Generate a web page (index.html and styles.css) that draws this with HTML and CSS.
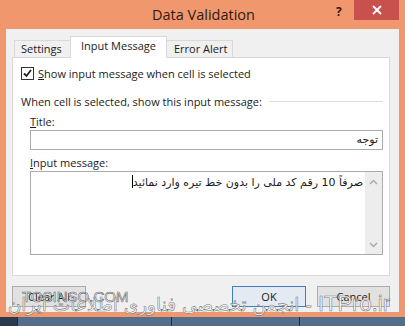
FILE: index.html
```html
<!DOCTYPE html>
<html>
<head>
<meta charset="utf-8">
<link rel="stylesheet" href="styles.css">
</head>
<body>
<div class="window">
  <div class="titlebar">
    <span class="title">Data Validation</span>
    <span class="help">?</span>
    <span class="close"><svg width="10" height="10" viewBox="0 0 10 10"><path d="M1 1L9 9M9 1L1 9" stroke="#fff" stroke-width="1.8"/></svg></span>
  </div>
  <div class="client">
    <div class="tabs">
      <div class="tab">Settings</div>
      <div class="tab active">Input Message</div>
      <div class="tab">Error Alert</div>
    </div>
    <div class="panel">
      <div class="check">
        <span class="box"><svg width="11" height="11" viewBox="0 0 11 11"><path d="M2 5.5L4.5 8L9 2" fill="none" stroke="#222" stroke-width="1.8"/></svg></span>
        <span><u>S</u>how input message when cell is selected</span>
      </div>
      <div class="group"><span>When cell is selected, show this input message:</span><span class="line"></span></div>
      <div class="lbl"><u>T</u>itle:</div>
      <div class="input" dir="rtl">توجه</div>
      <div class="lbl"><u>I</u>nput message:</div>
      <div class="textarea">
        <div class="text" dir="rtl">صرفاً 10 رقم کد ملی را بدون خط تیره وارد نمائید<span class="caret"></span></div>
        <div class="scroll">
          <svg width="9" height="6" viewBox="0 0 9 6"><path d="M1 5L4.5 1.5L8 5" fill="none" stroke="#a6a6a6" stroke-width="1.3"/></svg>
          <svg width="9" height="6" viewBox="0 0 9 6"><path d="M1 1L4.5 4.5L8 1" fill="none" stroke="#a6a6a6" stroke-width="1.3"/></svg>
        </div>
      </div>
    </div>
    <div class="buttons">
      <div class="btn">Clear All</div>
      <div class="spacer"></div>
      <div class="btn ok">OK</div>
      <div class="btn">Cancel</div>
    </div>
  </div>
  <div class="taskbar"><span class="seg s1"></span><span class="seg s2"></span><span class="seg s3"></span><span class="seg s4"></span></div>
  <div class="watermark" dir="rtl"><span class="wm-en">ITPro.ir</span> - انجمن تخصصی فناوری اطلاعات ایران</div>
  <div class="watermark2">TOSINSO.COM</div>
</div>
</body>
</html>
```
FILE: styles.css
```css
* { box-sizing: border-box; }
html, body { margin: 0; padding: 0; }
body {
  width: 405px;
  height: 326px;
  overflow: hidden;
  background: #f0976d;
  font-family: "Open Sans", "DejaVu Sans", sans-serif;
  font-size: 11px;
  color: #1b1b1b;
}
.window {
  position: relative;
  width: 405px;
  height: 326px;
  display: flex;
  flex-direction: column;
}
.titlebar {
  height: 29px;
  display: flex;
  align-items: flex-start;
  justify-content: center;
  position: relative;
}
.title {
  font-size: 14.5px;
  color: #2e1b12;
  line-height: 29px;
  margin-left: 2px;
}
.help {
  position: absolute;
  left: 336px;
  top: 3px;
  font-weight: bold;
  font-size: 12px;
  color: #2e1b12;
}
.close {
  position: absolute;
  left: 354px;
  top: 0;
  width: 45px;
  height: 20px;
  background: #c8514e;
  display: flex;
  align-items: center;
  justify-content: center;
}
.client {
  margin: 0 6px 0 6px;
  height: 283px;
  background: #f0f0f0;
  padding: 7px 9px 0 6px;
  display: flex;
  flex-direction: column;
}
.tabs {
  display: flex;
  align-items: flex-end;
  height: 22px;
  padding-left: 2px;
  position: relative;
  z-index: 2;
}
.tab {
  height: 17px;
  border: 1px solid #d9d9d9;
  border-bottom: none;
  background: #f0f0f0;
  line-height: 15px;
  padding: 0 6px;
  margin-bottom: 1px;
  white-space: nowrap;
}
.tab:first-child { width: 57px; }
.tab:nth-child(3) { width: 66px; border-left: none; padding: 0 0 0 7px; }
.tab.active {
  width: 97px;
  height: 22px;
  background: #fff;
  margin: 0 0 0 -1px;
  padding-left: 10px;
  line-height: 17px;
  border-right: 1px solid #d9d9d9;
}
.panel {
  height: 219px;
  margin-top: -1px;
  background: #fff;
  border: 1px solid #d9d9d9;
  padding: 9px 6px 0 8px;
  display: flex;
  flex-direction: column;
}
.check {
  display: flex;
  align-items: center;
  height: 13px;
  gap: 4px;
}
.box {
  width: 13px;
  height: 13px;
  border: 1px solid #333;
  display: flex;
  align-items: center;
  justify-content: center;
  background: #fff;
}
.group {
  display: flex;
  align-items: center;
  margin-top: 14px;
  height: 15px;
  gap: 7px;
}
.line {
  flex: 1;
  height: 1px;
  background: #dcdcdc;
}
.lbl {
  margin-left: 9px;
  height: 15px;
  line-height: 15px;
  margin-top: 5px;
}
.input {
  margin: 1px 0 0 9px;
  height: 20px;
  border: 1px solid #ababab;
  line-height: 18px;
  padding: 0 4px;
  font-family: "DejaVu Sans", sans-serif;
  font-size: 11px;
}
.textarea {
  margin: 1px 0 0 9px;
  height: 84px;
  border: 1px solid #ababab;
  display: flex;
}
.text {
  flex: 1;
  padding: 3px 2px 0 0;
  font-family: "DejaVu Sans", sans-serif;
  font-size: 11px;
  line-height: 15px;
}
.caret {
  display: inline-block;
  width: 1px;
  height: 13px;
  background: #000;
  vertical-align: -2px;
}
.scroll {
  width: 17px;
  background: #ededed;
  display: flex;
  flex-direction: column;
  align-items: center;
  justify-content: space-between;
  padding: 7px 0 6px;
}
.buttons {
  display: flex;
  margin-top: 10px;
  gap: 11px;
}
.spacer { flex: 1; }
.btn {
  width: 74px;
  height: 21px;
  border: 1px solid #adadad;
  background: #e1e1e1;
  text-align: center;
  line-height: 19px;
}
.btn + .btn { width: 73px; }
.btn.ok {
  border-color: #3c80c0;
  background: #e3eaf1;
}
.taskbar {
  margin-top: 5px;
  height: 9px;
  background: #536d8d;
  display: flex;
}
.seg { height: 9px; border-right: 1px solid #1d2c3d; }
.s1 { width: 18px; background: #2a3a4e; }
.s2 { width: 154px; }
.s3 { width: 128px; }
.s4 { flex: 1; border-right: none; }
.watermark {
  position: absolute;
  right: 15px;
  top: 292px;
  font-family: "DejaVu Sans", sans-serif;
  font-size: 18.5px;
  line-height: 24px;
  white-space: nowrap;
  color: rgba(255,255,255,0.88);
  -webkit-text-stroke: 0.6px rgba(80,80,80,0.75);
  z-index: 5;
}
.wm-en {
  font-family: "Liberation Sans", sans-serif;
  font-size: 22px;
}
.watermark2 {
  position: absolute;
  left: 22px;
  top: 288px;
  font-family: "Liberation Sans", sans-serif;
  font-size: 15px;
  line-height: 18px;
  white-space: nowrap;
  color: rgba(255,255,255,0.88);
  -webkit-text-stroke: 0.6px rgba(60,60,60,0.8);
  z-index: 6;
}
```
